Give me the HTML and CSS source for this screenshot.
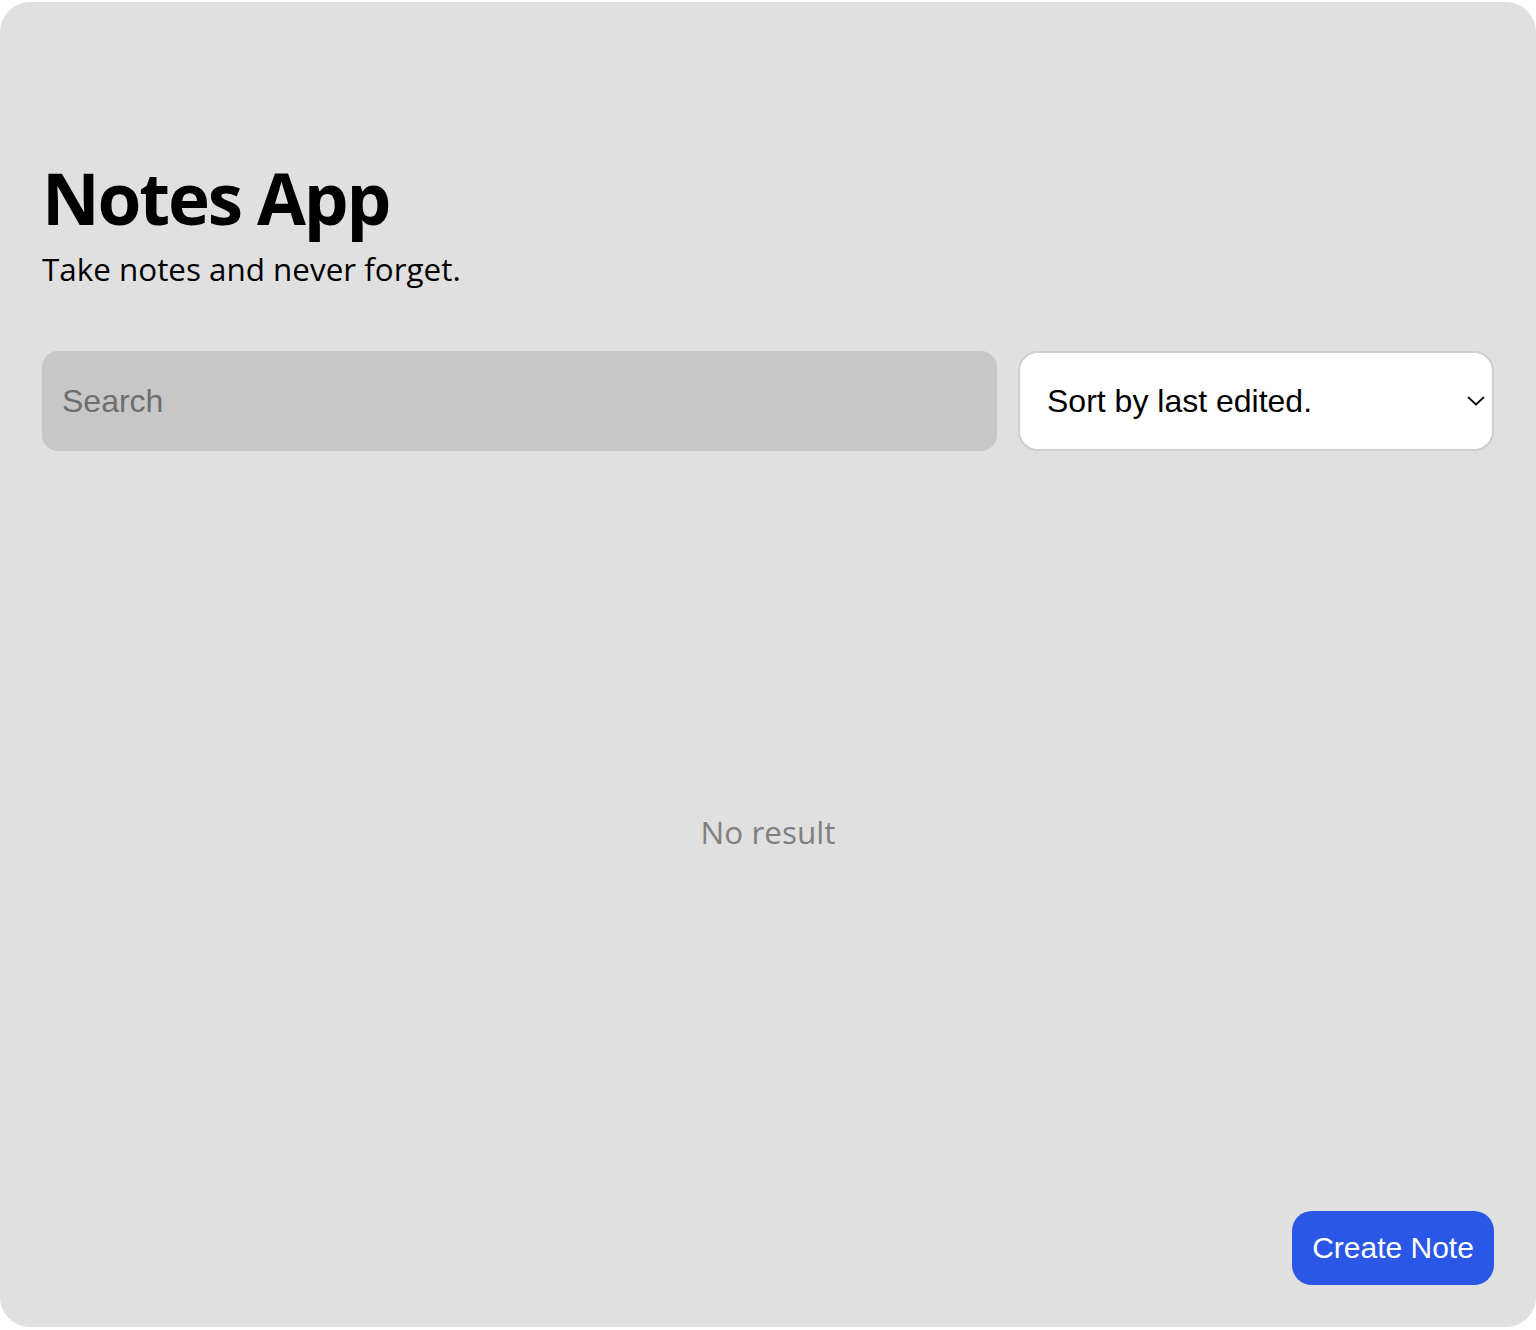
FILE: index.html
```html
<!DOCTYPE html>
<html>
<head>
<meta charset="utf-8">
<link rel="stylesheet" href="styles.css">
<title>Notes App</title>
</head>
<body>
<div class="app">
  <header class="header">
    <h1 class="title">Notes App</h1>
    <p class="subtitle">Take notes and never forget.</p>
  </header>
  <div class="controls">
    <input class="search" type="text" placeholder="Search">
    <div class="sort">
      <span class="sort-label">Sort by last edited.</span>
      <svg class="chev" width="18" height="10" viewBox="0 0 18 10"><path d="M1.5 1.5 L9 8.5 L16.5 1.5" fill="none" stroke="#111" stroke-width="1.8" stroke-linecap="round" stroke-linejoin="round"/></svg>
    </div>
  </div>
  <main class="list">
    <p class="empty">No result</p>
  </main>
  <footer class="footer">
    <button class="create">Create Note</button>
  </footer>
</div>
</body>
</html>
```
FILE: styles.css
```css
html, body {
  margin: 0;
  padding: 0;
  background: #ffffff;
}
body {
  padding-top: 2px;
}
.app {
  box-sizing: border-box;
  height: 1325px;
  background: #e0e0e0;
  border-radius: 30px;
  padding: 148px 42px 42px 42px;
  display: flex;
  flex-direction: column;
  font-family: "Open Sans", sans-serif;
}
.header {
  display: flex;
  flex-direction: column;
}
.title {
  margin: 0;
  font-family: "Open Sans", sans-serif;
  font-size: 71px;
  font-weight: 700;
  line-height: 96px;
  letter-spacing: -2.2px;
  color: #000;
  padding-left: 0;
}
.subtitle {
  margin: 0;
  font-size: 31.4px;
  line-height: 46px;
  color: #000;
}
.controls {
  margin-top: 59px;
  display: flex;
  gap: 21px;
}
.search {
  flex: 0 0 955px;
  box-sizing: border-box;
  height: 100px;
  border: none;
  border-radius: 16px;
  background: #c7c7c7;
  padding: 0 20px;
  font-family: "Liberation Sans", Arial, sans-serif;
  font-size: 32px;
  color: #000;
  outline: none;
}
.search::placeholder {
  color: #6e6e6e;
}
.sort {
  flex: 1;
  box-sizing: border-box;
  height: 100px;
  background: #ffffff;
  border: 2px solid #cfcfcf;
  border-radius: 20px;
  display: flex;
  align-items: center;
  justify-content: space-between;
  padding: 0 7px 0 27px;
  font-family: "Liberation Sans", Arial, sans-serif;
  font-size: 32px;
  color: #000;
}
.list {
  flex: 1;
  display: flex;
  align-items: center;
  justify-content: center;
}
.empty {
  margin: 0;
  font-size: 31.5px;
  color: #808080;
}
.footer {
  display: flex;
  justify-content: flex-end;
}
.create {
  width: 202px;
  height: 74px;
  border: none;
  border-radius: 20px;
  background: #2b57e6;
  color: #ffffff;
  font-family: "Liberation Sans", Arial, sans-serif;
  font-size: 30px;
  padding: 0;
}
```
